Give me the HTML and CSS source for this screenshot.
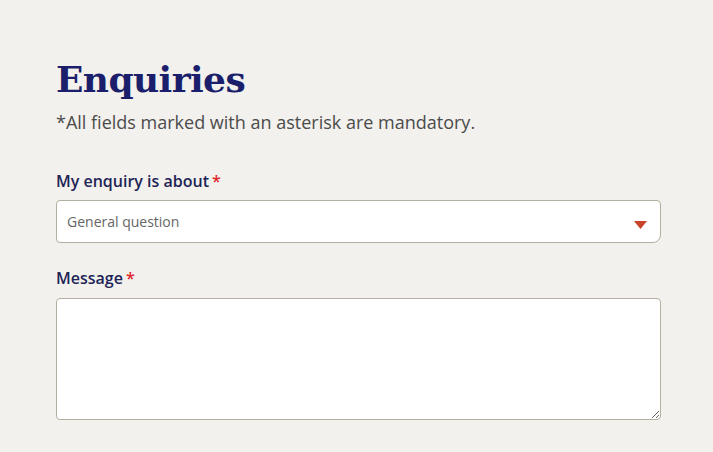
FILE: index.html
```html
<!DOCTYPE html>
<html>
<head>
<meta charset="utf-8">
<link rel="stylesheet" href="styles.css">
</head>
<body>
<main class="page">
  <h1 class="title">Enquiries</h1>
  <p class="note">*All fields marked with an asterisk are mandatory.</p>
  <div class="field">
    <label class="label">My enquiry is about<span class="req">*</span></label>
    <div class="select">
      <span class="select-text">General question</span>
      <svg class="arrow" width="13" height="8" viewBox="0 0 13 8"><path d="M0 0H13L6.5 8Z" fill="#c9432b"/></svg>
    </div>
  </div>
  <div class="field">
    <label class="label">Message<span class="req">*</span></label>
    <textarea class="textarea"></textarea>
  </div>
</main>
</body>
</html>
```
FILE: styles.css
```css
html, body { margin: 0; padding: 0; }
body { background: #f2f1ed; font-family: "Open Sans", sans-serif; }
.page { padding: 56px 52px 0 56px; }
.title {
  margin: 0;
  font-family: "DejaVu Serif", serif;
  font-weight: bold;
  font-size: 36px;
  line-height: 46px;
  color: #1b1f6b;
  letter-spacing: -0.6px;
}
.note {
  margin: 8px 0 0;
  font-size: 18px;
  line-height: 24px;
  color: #4b4b4b;
}
.field { margin-top: 36px; display: flex; flex-direction: column; }
.field + .field { margin-top: 24px; }
.label {
  font-size: 16px;
  font-weight: 600;
  color: #1e2456;
  line-height: 22px;
  margin-bottom: 8px;
}
.req { color: #e0262d; margin-left: 3px; }
.select {
  box-sizing: border-box;
  height: 43px;
  border: 1px solid #b3b09f;
  border-radius: 4px 4px 8px 4px;
  background: #fff;
  display: flex;
  align-items: center;
  justify-content: space-between;
  padding: 0 13px 0 10px;
}
.select-text { font-size: 14px; color: #666; }
.arrow { margin-top: 6px; }
.textarea {
  display: block;
  border: 1px solid #b3b09f;
  border-radius: 4px;
  background: #fff;
  resize: vertical;
  margin: 1px 0 0;
  padding: 6px;
  box-sizing: border-box;
  height: 122px;
  width: 605px;
}
```
